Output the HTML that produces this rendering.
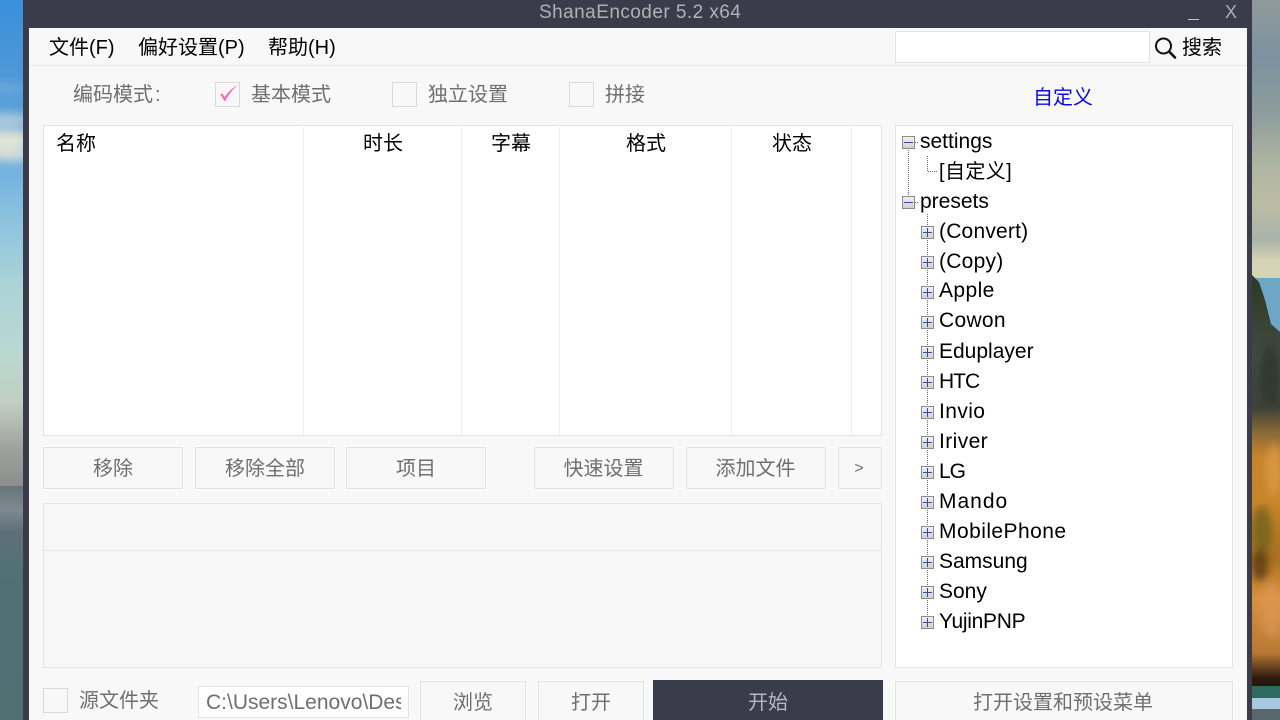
<!DOCTYPE html>
<html lang="zh">
<head>
<meta charset="utf-8">
<title>ShanaEncoder</title>
<style>
html,body{margin:0;padding:0;width:1280px;height:720px;overflow:hidden;background:#000}
body{position:relative;font-family:"Liberation Sans","Noto Sans CJK SC",sans-serif;font-size:20px;color:#000}
.a{position:absolute;box-sizing:border-box}
.t{position:absolute;white-space:nowrap;line-height:30px;height:30px}
.g{color:#6f6f6f}
.b{position:absolute;box-sizing:border-box;border:1px solid #e0e0e0;background:#f8f8f8;color:#6f6f6f;text-align:center;line-height:42px;overflow:hidden;outline:1px solid #fdfdfd}
.c{position:absolute;box-sizing:border-box;width:25px;height:25px;border:1px solid #d9d9d9;background:#f8f8f8}
.l{font-size:21px}
.d{position:absolute;width:1px;background:#e8eef5;top:127px;height:308px}
</style>
</head>
<body>
<svg class="a" style="left:0;top:0" width="1280" height="720" viewBox="0 0 1280 720">
<defs>
<linearGradient id="sky" x1="0" y1="0" x2="0" y2="1">
<stop offset="0" stop-color="#3a90da"/><stop offset=".14" stop-color="#4b97d8"/><stop offset=".3" stop-color="#66a9dc"/><stop offset=".42" stop-color="#86bede"/><stop offset=".58" stop-color="#abd3d8"/><stop offset=".72" stop-color="#b9d8d0"/><stop offset=".82" stop-color="#c2cfc2"/><stop offset=".92" stop-color="#9ea09c"/><stop offset="1" stop-color="#8a8c8c"/>
</linearGradient>
<linearGradient id="sea" x1="0" y1="0" x2="0" y2="1">
<stop offset="0" stop-color="#66747c"/><stop offset=".1" stop-color="#7c8a90"/><stop offset=".2" stop-color="#5d7078"/><stop offset=".4" stop-color="#4f7176"/><stop offset="1" stop-color="#4f6f72"/>
</linearGradient>
<linearGradient id="rsky" x1="0" y1="0" x2="0" y2="1">
<stop offset="0" stop-color="#8f9b9b"/><stop offset=".2" stop-color="#7c929f"/><stop offset=".38" stop-color="#8d9d9c"/><stop offset=".55" stop-color="#b0b5a2"/><stop offset=".68" stop-color="#bcbca4"/><stop offset=".8" stop-color="#aab4aa"/><stop offset=".87" stop-color="#d6d3b4"/><stop offset="1" stop-color="#d8d6b8"/>
</linearGradient>
<linearGradient id="cliff" x1="0" y1="0" x2="0" y2="1">
<stop offset="0" stop-color="#2c3a22"/><stop offset=".2" stop-color="#424a44"/><stop offset=".32" stop-color="#3e4238"/><stop offset=".38" stop-color="#8a6a38"/><stop offset=".44" stop-color="#c9852c"/><stop offset=".55" stop-color="#c8862a"/><stop offset=".68" stop-color="#a8701f"/><stop offset=".78" stop-color="#d8913f"/><stop offset=".91" stop-color="#b87834"/><stop offset=".97" stop-color="#2e1d10"/><stop offset="1" stop-color="#1c120a"/>
</linearGradient>
<filter id="bl" x="-50%" y="-100%" width="200%" height="300%"><feGaussianBlur stdDeviation="5"/></filter>
<filter id="bl2" x="-50%" y="-50%" width="200%" height="200%"><feGaussianBlur stdDeviation="4"/></filter>
</defs>
<rect x="0" y="0" width="24" height="490" fill="url(#sky)"/>
<rect x="0" y="486" width="24" height="234" fill="url(#sea)"/>
<g filter="url(#bl)" fill="#e2e4d8">
<ellipse cx="4" cy="120" rx="28" ry="6" opacity=".7"/>
<ellipse cx="6" cy="139" rx="28" ry="9"/>
<ellipse cx="10" cy="154" rx="24" ry="7" opacity=".9"/>
<ellipse cx="4" cy="88" rx="22" ry="3" opacity=".3"/>
</g>
<rect x="1252" y="0" width="28" height="300" fill="url(#rsky)"/>
<rect x="1252" y="278" width="28" height="90" fill="#6ea6c6"/>
<path d="M1252 275L1259 282L1265 300L1271 324L1280 332L1280 690L1252 690Z" fill="url(#cliff)"/>
<g filter="url(#bl2)">
<ellipse cx="1270" cy="375" rx="10" ry="30" fill="#2b3426" opacity=".7"/>
<ellipse cx="1262" cy="530" rx="10" ry="24" fill="#6b5f1e" opacity=".75"/>
<ellipse cx="1260" cy="565" rx="8" ry="16" fill="#4a2f14" opacity=".7"/>
<ellipse cx="1274" cy="470" rx="8" ry="26" fill="#e0a050" opacity=".6"/>
<ellipse cx="1272" cy="610" rx="10" ry="28" fill="#e09a58" opacity=".6"/>
</g>
<rect x="1252" y="686" width="28" height="12" fill="#2f6a60"/>
<rect x="1252" y="698" width="28" height="11" fill="#a9c7de"/>
<rect x="1252" y="709" width="28" height="11" fill="#59666c"/>
<rect x="23" y="0" width="1229" height="720" fill="#3b3c4b"/>
</svg>

<div class="a" style="left:29px;top:28px;width:1218px;height:692px;background:#f8f8f8"></div>
<div class="t" style="left:539px;top:-2px;color:#b0b0b6;font-size:19px;letter-spacing:.45px">ShanaEncoder 5.2 x64</div>
<div class="a" style="left:1188px;top:19px;width:11px;height:1px;background:#c4c4ca"></div>
<div class="t" style="left:1225px;top:-3px;color:#a8acbc;font-size:18px">X</div>

<div class="a" style="left:29px;top:65px;width:1218px;height:1px;background:#e6e6e6"></div>
<div class="t" style="left:49px;top:33px">文件(F)</div>
<div class="t" style="left:138px;top:33px">偏好设置(P)</div>
<div class="t" style="left:268px;top:33px">帮助(H)</div>
<div class="a" style="left:895px;top:31px;width:255px;height:32px;background:#fff;border:1px solid #e3e3e3"></div>
<svg class="a" style="left:1152px;top:35px" width="26" height="26" viewBox="0 0 26 26"><circle cx="11.5" cy="11" r="7.5" fill="none" stroke="#111" stroke-width="2"/><path d="M17 16.5L23 22.5" stroke="#111" stroke-width="2.6" stroke-linecap="round"/></svg>
<div class="t" style="left:1182px;top:33px">搜索</div>

<div class="t g" style="left:73px;top:80px">编码模式<span style="margin-left:2px">:</span></div>
<div class="c" style="left:215px;top:82px"></div>
<svg class="a" style="left:215px;top:82px" width="25" height="25" viewBox="0 0 25 25"><path d="M5 12L7.4 11.6L9.8 15C13 10 17 6.3 22.5 3C17.5 8 13.3 13 10.5 19L9.3 19Z" fill="#f472bc"/></svg>
<div class="t g" style="left:251px;top:80px">基本模式</div>
<div class="c" style="left:392px;top:82px"></div>
<div class="t g" style="left:428px;top:80px">独立设置</div>
<div class="c" style="left:569px;top:82px"></div>
<div class="t g" style="left:605px;top:80px">拼接</div>
<div class="t" style="left:1033px;top:83px;color:#0a0af0">自定义</div>

<div class="a" style="left:43px;top:125px;width:839px;height:311px;background:#fff;border:1px solid #e3e3e3"></div>
<div class="d" style="left:303px"></div>
<div class="d" style="left:461px"></div>
<div class="d" style="left:559px"></div>
<div class="d" style="left:731px"></div>
<div class="d" style="left:851px"></div>
<div class="t" style="left:56px;top:129px">名称</div>
<div class="t" style="left:363px;top:129px">时长</div>
<div class="t" style="left:491px;top:129px">字幕</div>
<div class="t" style="left:626px;top:129px">格式</div>
<div class="t" style="left:772px;top:129px">状态</div>

<div class="b" style="left:43px;top:447px;width:140px;height:42px">移除</div>
<div class="b" style="left:195px;top:447px;width:140px;height:42px">移除全部</div>
<div class="b" style="left:346px;top:447px;width:140px;height:42px">项目</div>
<div class="b" style="left:534px;top:447px;width:139px;height:42px;width:140px;text-indent:-1px">快速设置</div>
<div class="b" style="left:686px;top:447px;width:140px;height:42px;text-indent:-1px">添加文件</div>
<div class="b" style="left:838px;top:447px;width:44px;height:42px;font-size:16px;text-indent:-2px">&gt;</div>

<div class="a" style="left:43px;top:503px;width:839px;height:165px;border:1px solid #e3e3e3;background:#f8f8f8"></div>
<div class="a" style="left:44px;top:550px;width:837px;height:1px;background:#e6e6e6"></div>

<div class="a" style="left:895px;top:125px;width:338px;height:543px;background:#fff;border:1px solid #e3e3e3"></div>
<svg class="a" style="left:895px;top:125px" width="60" height="510" viewBox="895 125 60 510">
<defs>
<linearGradient id="ic" x1="0" y1="0" x2="0" y2="1"><stop offset="0" stop-color="#f2f2f2"/><stop offset="1" stop-color="#cfcfcf"/></linearGradient>
<g id="m"><rect x=".5" y=".5" width="12" height="12" fill="url(#ic)" stroke="#8c8c8c"/><path d="M2 6.5H11" stroke="#2f4f9f" stroke-width="1"/></g>
<g id="p"><rect x=".5" y=".5" width="12" height="12" fill="url(#ic)" stroke="#8c8c8c"/><path d="M2 6.5H11M6.5 2V11" stroke="#2f4f9f" stroke-width="1"/></g>
</defs>
<g stroke="#6a6a6a" stroke-width="1" stroke-dasharray="1 1" fill="none">
<path d="M908.5 150V195"/>
<path d="M927.5 156V171.5H937"/>
<path d="M927.5 214V616"/>
<path d="M915 142.5H919M915 202.5H919"/>
</g>
<use href="#m" x="902" y="136"/>
<use href="#m" x="902" y="196"/>
<use href="#p" x="921" y="226"/>
<use href="#p" x="921" y="256"/>
<use href="#p" x="921" y="286"/>
<use href="#p" x="921" y="316"/>
<use href="#p" x="921" y="346"/>
<use href="#p" x="921" y="376"/>
<use href="#p" x="921" y="406"/>
<use href="#p" x="921" y="436"/>
<use href="#p" x="921" y="466"/>
<use href="#p" x="921" y="496"/>
<use href="#p" x="921" y="526"/>
<use href="#p" x="921" y="556"/>
<use href="#p" x="921" y="586"/>
<use href="#p" x="921" y="616"/>
</svg>
<div class="t l" style="left:920px;top:127px">settings</div>
<div class="t" style="left:939px;top:157px;letter-spacing:.4px">[自定义]</div>
<div class="t l" style="left:920px;top:187px">presets</div>
<div class="t l" style="left:939px;top:217px;letter-spacing:.2px">(Convert)</div>
<div class="t l" style="left:939px;top:247px;letter-spacing:.25px">(Copy)</div>
<div class="t l" style="left:939px;top:276px;letter-spacing:.4px">Apple</div>
<div class="t l" style="left:939px;top:306px;letter-spacing:.3px">Cowon</div>
<div class="t l" style="left:939px;top:337px">Eduplayer</div>
<div class="t l" style="left:939px;top:367px;letter-spacing:-1px">HTC</div>
<div class="t l" style="left:939px;top:397px;letter-spacing:.4px">Invio</div>
<div class="t l" style="left:939px;top:427px;letter-spacing:.4px">Iriver</div>
<div class="t l" style="left:939px;top:457px;letter-spacing:-1px">LG</div>
<div class="t l" style="left:939px;top:487px;letter-spacing:1px">Mando</div>
<div class="t l" style="left:939px;top:517px;letter-spacing:.45px">MobilePhone</div>
<div class="t l" style="left:939px;top:547px">Samsung</div>
<div class="t l" style="left:939px;top:577px">Sony</div>
<div class="t l" style="left:939px;top:607px;letter-spacing:-.3px">YujinPNP</div>

<div class="c" style="left:43px;top:688px"></div>
<div class="t g" style="left:79px;top:686px">源文件夹</div>
<div class="a" style="left:198px;top:686px;width:211px;height:32px;background:#fff;border:1px solid #e3e3e3;overflow:hidden;color:#6f6f6f;line-height:31px;padding-left:7px;white-space:nowrap;font-size:21px"><span style="display:block;width:195px;overflow:hidden">C:\Users\Lenovo\Desktop</span></div>
<div class="b" style="left:420px;top:681px;width:106px;height:50px">浏览</div>
<div class="b" style="left:538px;top:681px;width:106px;height:50px">打开</div>
<div class="a" style="left:653px;top:680px;width:230px;height:40px;background:#3b3c4b;color:#b4b6c0;text-align:center;line-height:46px">开始</div>
<div class="b" style="left:895px;top:681px;width:338px;height:50px;text-indent:-2px">打开设置和预设菜单</div>
</body>
</html>
